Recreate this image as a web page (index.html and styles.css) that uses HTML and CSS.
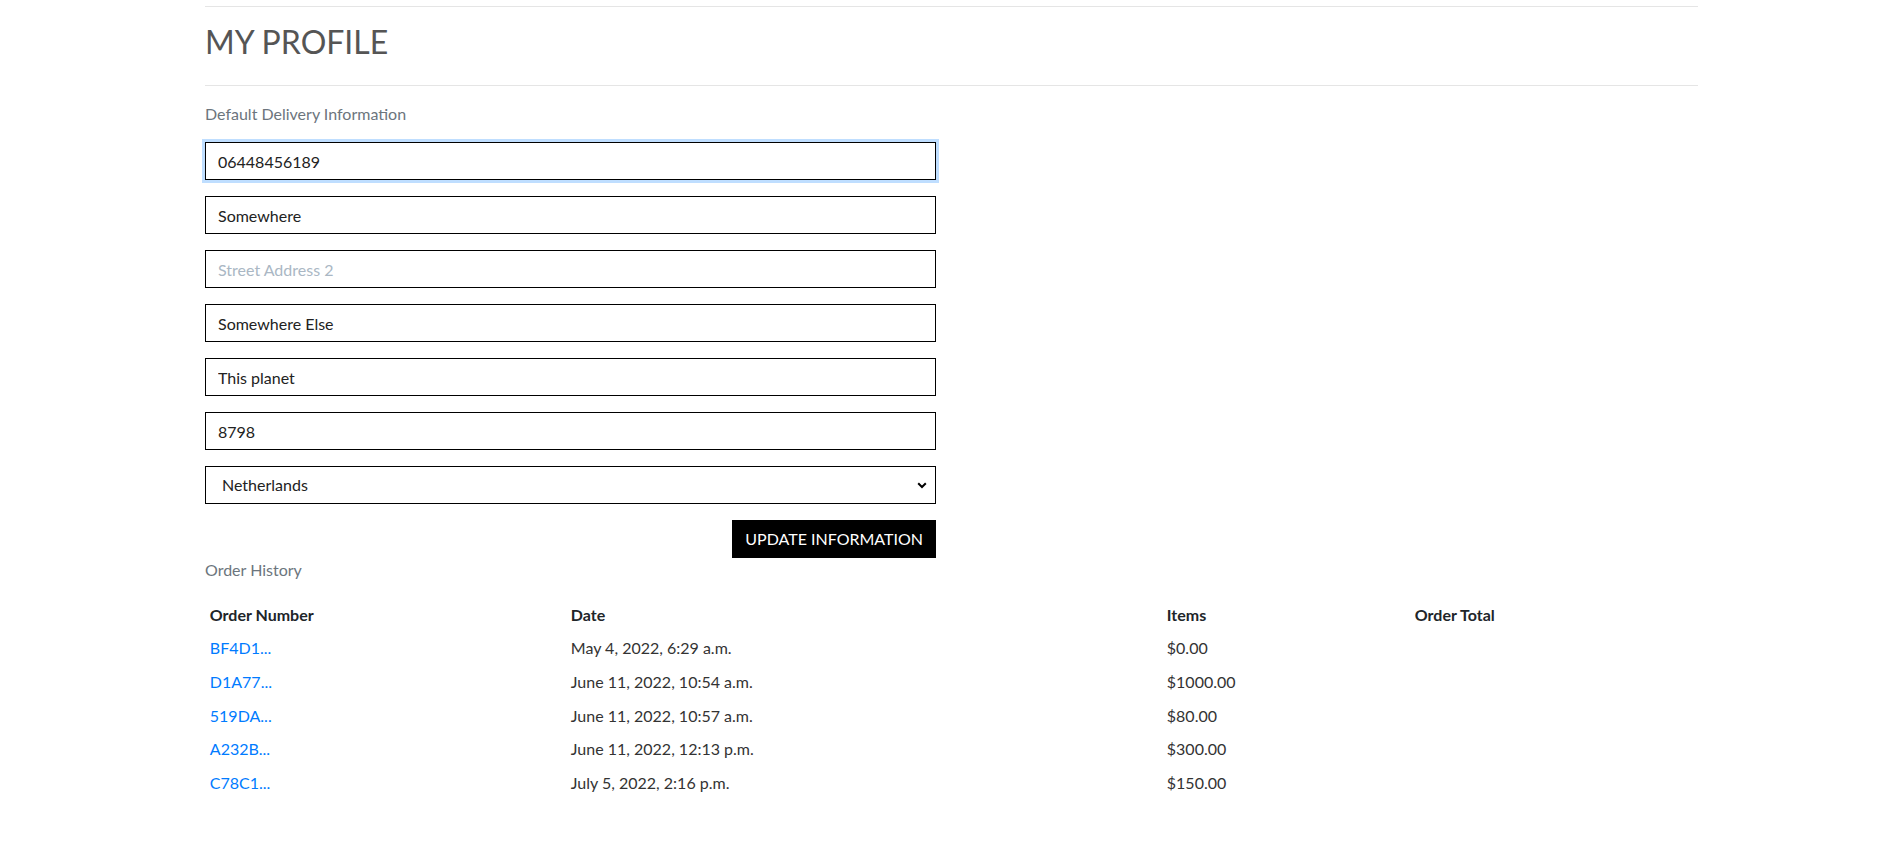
FILE: index.html
```html
<!DOCTYPE html>
<html lang="en">
<head>
<meta charset="utf-8">
<title>My Profile</title>
<link rel="stylesheet" href="styles.css">
</head>
<body>
<main class="container">
  <hr class="rule">
  <h2 class="page-title">My Profile</h2>
  <hr class="rule rule-bottom">
  <div class="row">
    <section class="col-half">
      <p class="muted">Default Delivery Information</p>
      <form class="profile-form">
        <input class="field is-focused" type="text" value="06448456189">
        <input class="field" type="text" value="Somewhere">
        <input class="field" type="text" placeholder="Street Address 2">
        <input class="field" type="text" value="Somewhere Else">
        <input class="field" type="text" value="This planet">
        <input class="field" type="text" value="8798">
        <div class="select-wrap">
          <select class="field select">
            <option>Netherlands</option>
          </select>
          <svg class="chevron" width="10" height="8" viewBox="0 0 10 8"><path d="M1.2 2.2 L5 6 L8.8 2.2" fill="none" stroke="#000" stroke-width="2"/></svg>
        </div>
        <div class="actions">
          <button type="button" class="btn-black">Update Information</button>
        </div>
      </form>
      <p class="muted history-label">Order History</p>
    </section>
  </div>
  <table class="orders">
    <colgroup>
      <col class="c1"><col class="c2"><col class="c3"><col class="c4">
    </colgroup>
    <thead>
      <tr><th>Order Number</th><th>Date</th><th>Items</th><th>Order Total</th></tr>
    </thead>
    <tbody>
      <tr><td><a href="#">BF4D1...</a></td><td>May 4, 2022, 6:29 a.m.</td><td>$0.00</td><td></td></tr>
      <tr><td><a href="#">D1A77...</a></td><td>June 11, 2022, 10:54 a.m.</td><td>$1000.00</td><td></td></tr>
      <tr><td><a href="#">519DA...</a></td><td>June 11, 2022, 10:57 a.m.</td><td>$80.00</td><td></td></tr>
      <tr><td><a href="#">A232B...</a></td><td>June 11, 2022, 12:13 p.m.</td><td>$300.00</td><td></td></tr>
      <tr><td><a href="#">C78C1...</a></td><td>July 5, 2022, 2:16 p.m.</td><td>$150.00</td><td></td></tr>
    </tbody>
  </table>
</main>
</body>
</html>
```

FILE: styles.css
```css
* { box-sizing: border-box; }
html, body { margin: 0; padding: 0; background: #fff; }
body {
  font-family: "Lato", "Liberation Sans", sans-serif;
  font-size: 16px;
  line-height: 1.5;
  color: #212529;
}
.container {
  width: 1493px;
  margin-left: 205px;
  padding-top: 6px;
}
.rule {
  border: 0;
  border-top: 1px solid rgba(0,0,0,.1);
  margin: 0;
}
.page-title {
  font-weight: 400;
  font-size: 32px;
  line-height: 38px;
  text-transform: uppercase;
  color: #555;
  margin: 16px 0 24px;
}
.rule-bottom { margin-bottom: 16px; }
.row { display: flex; }
.col-half { width: 731px; }
.muted { color: #6c757d; margin: 0 0 16px; }
.profile-form { display: flex; flex-direction: column; }
.field {
  display: block;
  width: 100%;
  height: 38px;
  padding: 6px 12px;
  font-family: inherit;
  font-size: 16px;
  line-height: 1.5;
  color: #222;
  background: #fff;
  border: 1px solid #000;
  border-radius: 0;
  margin: 0 0 16px;
  outline: none;
}
.field::placeholder { color: #aab7c4; }
.is-focused { box-shadow: 0 0 0 3px rgba(0,123,255,.25); }
.select-wrap { position: relative; }
.select {
  -webkit-appearance: none;
  appearance: none;
  padding-left: 16px;
}
.chevron {
  position: absolute;
  right: 9px;
  top: 15px;
}
.actions { display: flex; justify-content: flex-end; }
.btn-black {
  font-family: inherit;
  font-size: 16px;
  line-height: 1.5;
  padding: 7px 13px;
  height: 38px;
  background: #000;
  color: #fff;
  border: 0;
  border-radius: 0;
  text-transform: uppercase;
}
.history-label { margin: 0 0 16px; }
.orders {
  width: 1493px;
  table-layout: fixed;
  border-collapse: collapse;
}
.c1 { width: 361px; }
.c2 { width: 596px; }
.c3 { width: 248px; }
.c4 { width: 288px; }
.orders th, .orders td {
  padding: 4.8px;
  text-align: left;
  vertical-align: top;
  line-height: 24px;
}
.orders th { font-weight: 700; color: #212529; }
.orders td { color: #333; }
.orders a { color: #007bff; text-decoration: none; }
```
